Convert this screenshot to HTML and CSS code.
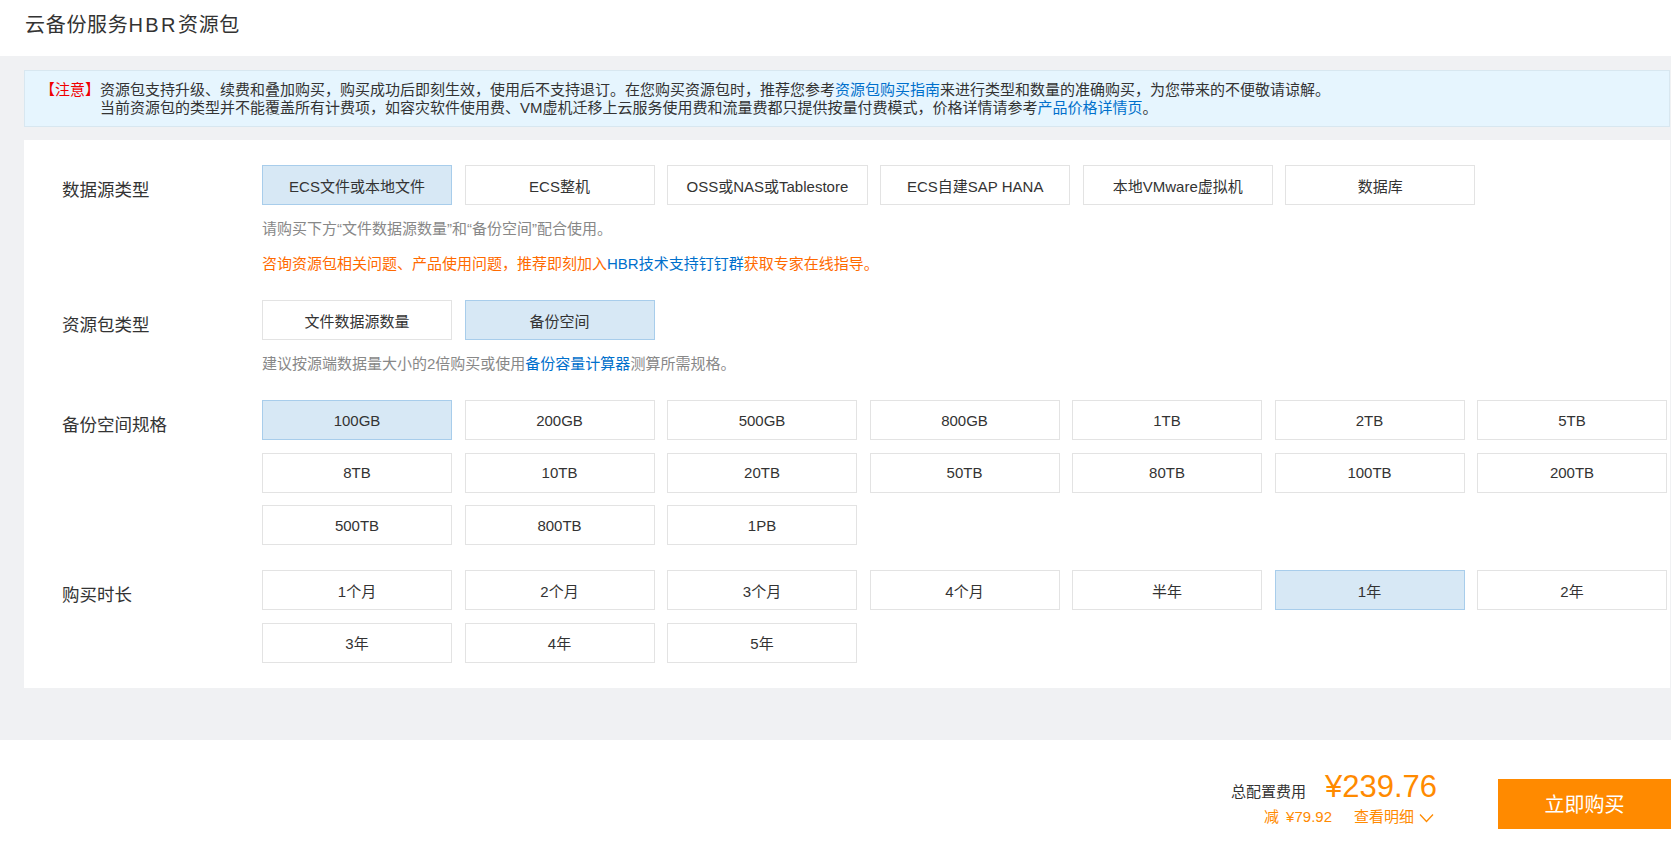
FILE: index.html
```html
<!DOCTYPE html>
<html lang="zh-CN">
<head>
<meta charset="utf-8">
<title>云备份服务HBR资源包</title>
<link rel="stylesheet" href="styles.css">
</head>
<body>
<header class="page-header">
  <h1 class="page-title">云备份服务<span class="latin">HBR</span>资源包</h1>
</header>
<main class="main">
  <div class="notice">
    <span class="notice-tag">【注意】</span>
    <div class="notice-body">
      <p>资源包支持升级、续费和叠加购买，购买成功后即刻生效，使用后不支持退订。在您购买资源包时，推荐您参考<a class="link" href="#">资源包购买指南</a>来进行类型和数量的准确购买，为您带来的不便敬请谅解。</p>
      <p>当前资源包的类型并不能覆盖所有计费项，如容灾软件使用费、VM虚机迁移上云服务使用费和流量费都只提供按量付费模式，价格详情请参考<a class="link" href="#">产品价格详情页</a>。</p>
    </div>
  </div>

  <section class="card">
    <div class="row">
      <div class="row-label">数据源类型</div>
      <div class="row-body">
        <div class="opts">
          <span class="opt selected">ECS文件或本地文件</span>
          <span class="opt">ECS整机</span>
          <span class="opt">OSS或NAS或Tablestore</span>
          <span class="opt">ECS自建SAP HANA</span>
          <span class="opt">本地VMware虚拟机</span>
          <span class="opt">数据库</span>
        </div>
        <p class="hint">请购买下方<span class="q">“</span>文件数据源数量<span class="q">”</span>和<span class="q">“</span>备份空间<span class="q">”</span>配合使用。</p>
        <p class="hint warn">咨询资源包相关问题、产品使用问题，推荐即刻加入<a class="link" href="#">HBR技术支持钉钉群</a>获取专家在线指导。</p>
      </div>
    </div>

    <div class="row">
      <div class="row-label">资源包类型</div>
      <div class="row-body">
        <div class="opts">
          <span class="opt">文件数据源数量</span>
          <span class="opt selected">备份空间</span>
        </div>
        <p class="hint">建议按源端数据量大小的2倍购买或使用<a class="link" href="#">备份容量计算器</a>测算所需规格。</p>
      </div>
    </div>

    <div class="row">
      <div class="row-label">备份空间规格</div>
      <div class="row-body">
        <div class="opts">
          <span class="opt selected">100GB</span>
          <span class="opt">200GB</span>
          <span class="opt">500GB</span>
          <span class="opt">800GB</span>
          <span class="opt">1TB</span>
          <span class="opt">2TB</span>
          <span class="opt">5TB</span>
          <span class="opt">8TB</span>
          <span class="opt">10TB</span>
          <span class="opt">20TB</span>
          <span class="opt">50TB</span>
          <span class="opt">80TB</span>
          <span class="opt">100TB</span>
          <span class="opt">200TB</span>
          <span class="opt">500TB</span>
          <span class="opt">800TB</span>
          <span class="opt">1PB</span>
        </div>
      </div>
    </div>

    <div class="row">
      <div class="row-label">购买时长</div>
      <div class="row-body">
        <div class="opts">
          <span class="opt">1个月</span>
          <span class="opt">2个月</span>
          <span class="opt">3个月</span>
          <span class="opt">4个月</span>
          <span class="opt">半年</span>
          <span class="opt selected">1年</span>
          <span class="opt">2年</span>
          <span class="opt">3年</span>
          <span class="opt">4年</span>
          <span class="opt">5年</span>
        </div>
      </div>
    </div>
  </section>
</main>

<footer class="footer">
  <div class="price-block">
    <div class="price-line">
      <span class="price-label">总配置费用</span>
      <span class="price">¥239.76</span>
    </div>
    <div class="price-sub">
      <span class="discount">减 ¥79.92</span>
      <a class="detail" href="#">查看明细
        <svg class="chev" width="15" height="10" viewBox="0 0 15 10" aria-hidden="true"><path d="M1 1.5 L7.5 8.5 L14 1.5" fill="none" stroke="#ff8a00" stroke-width="1.3"/></svg>
      </a>
    </div>
  </div>
  <button class="buy-btn" type="button">立即购买</button>
</footer>
</body>
</html>
```

FILE: styles.css
```css
* { box-sizing: border-box; }

html, body {
  margin: 0;
  padding: 0;
}

body {
  width: 1671px;
  height: 842px;
  overflow: hidden;
  background: #f0f1f3;
  font-family: "Liberation Sans", Arial, "Noto Sans CJK SC", sans-serif;
  color: #333;
}

p { margin: 0; }

.link {
  color: #0070cc;
  text-decoration: none;
}

.page-header {
  height: 56px;
  background: #fff;
  padding-left: 25px;
}

.page-title {
  margin: 0;
  font-size: 20px;
  font-weight: normal;
  line-height: 50px;
  letter-spacing: 0.7px;
  color: #333;
}

.page-title .latin {
  letter-spacing: 2.4px;
}

.main {
  padding: 14px 1px 52px 24px;
  background: linear-gradient(to bottom, #f0f1f3 0, #f0f1f3 687px, #e6e7ea 739px);
}

.notice {
  display: flex;
  height: 57px;
  padding: 9.5px 15px;
  background: #e6f5fe;
  border: 1px solid #d8e7f0;
  font-size: 15px;
  line-height: 18px;
  color: #333;
}

.notice-tag {
  color: #f00000;
  flex: none;
}

.notice-body {
  flex: 1;
  white-space: nowrap;
}

.card {
  margin-top: 13px;
  height: 547.5px;
  background: #fff;
  padding: 25px 0 25px 0;
}

.row {
  display: flex;
}

.row + .row {
  margin-top: 25px;
}

.row-label {
  flex: none;
  width: 238px;
  padding-left: 38px;
  padding-top: 5px;
  font-size: 17.5px;
  line-height: 40px;
  color: #333;
}

.row-body {
  flex: 1;
}

.opts {
  display: flex;
  flex-wrap: wrap;
  gap: 12.5px;
  width: 1405px;
}

.opt {
  display: flex;
  align-items: center;
  justify-content: center;
  min-width: 190px;
  height: 40px;
  padding: 0 18.5px;
  border: 1px solid #e3e3e3;
  background: #fff;
  font-size: 15px;
  color: #333;
  white-space: nowrap;
}

.opt.selected {
  background: #d7e8f5;
  border-color: #a8cdeb;
}

.hint {
  margin-top: 12.5px;
  font-size: 15px;
  line-height: 22.5px;
  color: #888;
  white-space: nowrap;
}

.hint.warn {
  color: #ff6a00;
}

.hint .q {
  font-family: "Liberation Sans", Arial, sans-serif;
}

.footer {
  height: 103px;
  background: #fff;
  display: flex;
  justify-content: flex-end;
  align-items: flex-start;
  padding-top: 39px;
}

.price-block {
  display: flex;
  flex-direction: column;
  align-items: flex-end;
  margin-right: 61px;
  margin-top: -9.5px;
}

.price-line {
  display: flex;
  align-items: baseline;
}

.price-label {
  font-size: 15px;
  color: #333;
  margin-right: 19px;
}

.price {
  font-size: 31px;
  line-height: 36px;
  color: #ff8a00;
}

.price-sub {
  display: flex;
  align-items: center;
  margin-top: 2px;
  margin-right: 3px;
  font-size: 15px;
  line-height: 20px;
  color: #ff8a00;
}

.discount {
  margin-right: 22px;
  word-spacing: 3px;
}

.detail {
  display: flex;
  align-items: center;
  color: #ff8a00;
  text-decoration: none;
}

.chev {
  margin-left: 5px;
  margin-top: 2px;
}

.buy-btn {
  width: 173px;
  height: 50px;
  border: 0;
  background: #ff8a00;
  color: #fff;
  font-family: "Liberation Sans", Arial, "Noto Sans CJK SC", sans-serif;
  font-size: 20px;
  padding: 0;
}
```
